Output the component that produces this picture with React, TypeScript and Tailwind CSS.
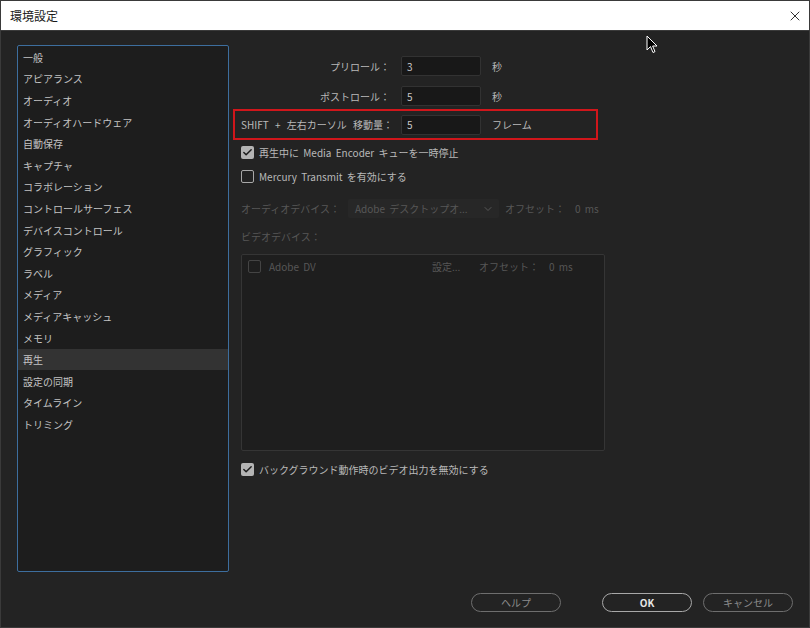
import { Check, ChevronDown, X } from "lucide-react";

const jp = { fontFamily: '"Noto Sans CJK JP", "Noto Sans", sans-serif' };

const menuItems = [
  "一般",
  "アピアランス",
  "オーディオ",
  "オーディオハードウェア",
  "自動保存",
  "キャプチャ",
  "コラボレーション",
  "コントロールサーフェス",
  "デバイスコントロール",
  "グラフィック",
  "ラベル",
  "メディア",
  "メディアキャッシュ",
  "メモリ",
  "再生",
  "設定の同期",
  "タイムライン",
  "トリミング",
];

function CheckBox({ checked, disabled }: { checked?: boolean; disabled?: boolean }) {
  if (checked) {
    return (
      <span className="flex h-[13px] w-[13px] items-center justify-center rounded-[2px] bg-[#b4b4b4]">
        <Check size={11} strokeWidth={3.2} className="text-[#1d1d1d]" />
      </span>
    );
  }
  return (
    <span
      className={
        disabled
          ? "h-[13px] w-[13px] rounded-[2px] border border-[#444444]"
          : "h-[13px] w-[13px] rounded-[2px] border border-[#a8a8a8]"
      }
    />
  );
}

function NumRow({ label, value, unit, boxed }: { label: string; value: string; unit: string; boxed?: boolean }) {
  return (
    <div className="flex h-[20px] items-center whitespace-nowrap">
      <div className={boxed ? "w-[152px] text-left" : "w-[152px] pr-[3px] text-right"}>{label}</div>
      <div className="ml-[8px] flex h-[20px] w-[80px] items-center rounded-[2px] border border-[#323232] bg-[#181818] pl-[5px] text-[#c8c8c8]">
        {value}
      </div>
      <div className="ml-[11px]">{unit}</div>
    </div>
  );
}

export default function App() {
  return (
    <div className="relative flex h-[628px] w-[810px] flex-col overflow-hidden bg-[#232323] text-[10px]" style={jp}>
      {/* title bar */}
      <div className="flex h-[31px] items-center justify-between border border-[#3a3a3a] bg-white pl-[9px] pr-[6px] text-[12px] text-[#1a1a1a]">
        <span>環境設定</span>
        <X size={16} strokeWidth={1.4} className="text-[#222]" />
      </div>

      <div className="flex flex-1 border-x border-b border-[#3a3a3a]">
        {/* sidebar */}
        <div className="ml-[16px] mt-[14px] h-[527px] w-[212px] rounded-[2px] border border-[#3d6e9e] bg-[#1d1d1d] pt-[0.5px] text-[#c4c4c4]">
          {menuItems.map((item) => (
            <div
              key={item}
              className={
                item === "再生"
                  ? "flex h-[21.6px] items-center bg-[#333333] pl-[5px]"
                  : "flex h-[21.6px] items-center pl-[5px]"
              }
            >
              {item}
            </div>
          ))}
        </div>

        {/* settings panel */}
        <div className="ml-[4px] flex flex-col pt-[25px] text-[#b9b9b9] [word-spacing:2px]">
          <div className="pl-[8px]">
            <NumRow label="プリロール：" value="3" unit="秒" />
          </div>
          <div className="mt-[10px] pl-[8px]">
            <NumRow label="ポストロール：" value="5" unit="秒" />
          </div>
          <div className="mt-[3px] flex h-[31px] w-[365px] items-center border-2 border-[#d0161b]">
            <div className="ml-[6px] [word-spacing:4px]">
              <NumRow label="SHIFT + 左右カーソル 移動量：" value="5" unit="フレーム" boxed />
            </div>
          </div>

          <div className="ml-[8px] mt-[6px] flex h-[13px] items-center gap-[5px]">
            <CheckBox checked />
            <span>再生中に Media Encoder キューを一時停止</span>
          </div>
          <div className="ml-[8px] mt-[11px] flex h-[13px] items-center gap-[5px]">
            <CheckBox />
            <span>Mercury Transmit を有効にする</span>
          </div>

          {/* disabled devices */}
          <div className="ml-[8px] mt-[16px] flex h-[19px] items-center whitespace-nowrap text-[#575757]">
            <span className="w-[107px]">オーディオデバイス：</span>
            <div className="flex h-[19px] w-[151px] items-center justify-between rounded-[2px] bg-[#272727] pl-[7px] pr-[5px]">
              <span>Adobe デスクトップオ...</span>
              <ChevronDown size={12} className="text-[#575757]" />
            </div>
            <span className="ml-[6px]">オフセット：</span>
            <span className="ml-[10px]">0 ms</span>
          </div>
          <div className="ml-[8px] mt-[11px] text-[#575757]">ビデオデバイス：</div>

          <div className="ml-[8px] mt-[10px] h-[197px] w-[364px] rounded-[2px] border border-[#353535] bg-[#1e1e1e] text-[#575757]">
            <div className="flex h-[22px] items-center whitespace-nowrap pl-[6px]">
              <CheckBox disabled />
              <span className="ml-[8px] w-[163px]">Adobe DV</span>
              <span className="w-[47px]">設定...</span>
              <span>オフセット：</span>
              <span className="ml-[10px]">0 ms</span>
            </div>
          </div>

          <div className="ml-[8px] mt-[12px] flex h-[13px] items-center gap-[5px]">
            <CheckBox checked />
            <span>バックグラウンド動作時のビデオ出力を無効にする</span>
          </div>
        </div>
      </div>

      {/* footer buttons */}
      <div className="absolute bottom-[16px] left-[471px] flex items-center">
        <button className="flex h-[19px] w-[90px] items-center justify-center rounded-full border border-[#6e6e6e] text-[#8c8c8c]">
          ヘルプ
        </button>
        <button className="ml-[41px] flex h-[19px] w-[90px] items-center justify-center rounded-full border-[1.5px] border-[#a8a8a8] font-bold text-[#e6e6e6]">
          OK
        </button>
        <button className="ml-[11px] flex h-[19px] w-[90px] items-center justify-center rounded-full border border-[#6e6e6e] text-[#8c8c8c]">
          キャンセル
        </button>
      </div>

      {/* mouse pointer */}
      <svg className="absolute left-[646px] top-[35px]" width="12" height="19" viewBox="0 0 12 19">
        <path d="M1 1 L1 15 L4.5 11.5 L7 17.5 L9 16.6 L6.6 11 L11 11 Z" fill="#000" stroke="#fff" strokeWidth="1" />
      </svg>
    </div>
  );
}
